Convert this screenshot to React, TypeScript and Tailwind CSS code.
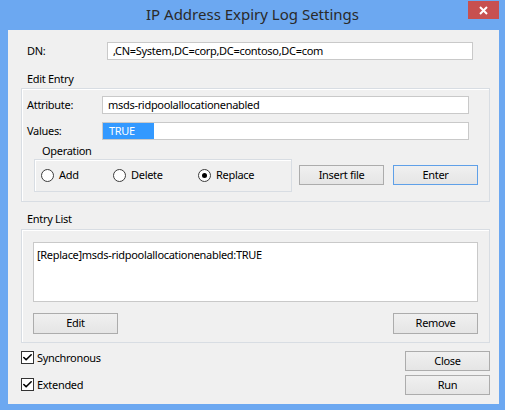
import { Check } from "lucide-react";

function Field({ label, children }: { label: string; children: React.ReactNode }) {
  return (
    <div className="flex items-center">
      <span className="w-[80px] pl-[5px] leading-[16px]">{label}</span>
      {children}
    </div>
  );
}

function TextBox({
  value,
  width,
  selected,
}: {
  value: string;
  width: string;
  selected?: boolean;
}) {
  return (
    <div
      className={`${width} flex h-[18px] items-center border border-[#c9c9c9] bg-white`}
    >
      {selected ? (
        <span className="flex h-full w-[51px] items-center bg-[#3399ff] pl-[6px] text-white">
          {value}
        </span>
      ) : (
        <span className="pl-[5px] whitespace-nowrap">{value}</span>
      )}
    </div>
  );
}

function Btn({
  label,
  focused,
  className,
}: {
  label: string;
  focused?: boolean;
  className?: string;
}) {
  return (
    <button
      type="button"
      className={`flex h-[20px] w-[85px] items-center justify-center border bg-gradient-to-b from-[#f0f0f0] to-[#e5e5e5] text-black ${
        focused ? "border-[#5fa0e8]" : "border-[#acacac]"
      } ${className ?? ""}`}
    >
      {label}
    </button>
  );
}

function Radio({
  label,
  checked,
  width,
}: {
  label: string;
  checked?: boolean;
  width?: string;
}) {
  return (
    <div className={`flex items-center gap-[5px] ${width ?? ""}`}>
      <span className="flex h-[13px] w-[13px] items-center justify-center rounded-full border border-[#3c3c3c] bg-white">
        {checked ? (
          <span className="h-[5px] w-[5px] rounded-full bg-black" />
        ) : null}
      </span>
      <span>{label}</span>
    </div>
  );
}

function CheckBox({ label }: { label: string }) {
  return (
    <div className="flex h-[13px] items-center gap-[3px]">
      <span className="flex h-[13px] w-[13px] items-center justify-center border border-[#333] bg-white">
        <Check className="h-[11px] w-[11px] text-black" strokeWidth={3.5} />
      </span>
      <span className="leading-[13px]">{label}</span>
    </div>
  );
}

export default function App() {
  return (
    <div
      className="h-[410px] w-[505px] bg-[#6ca8f1] text-[11px] tracking-[-0.3px] text-black"
      style={{ fontFamily: '"Noto Sans", "Open Sans", sans-serif' }}
    >
      <div className="relative flex h-[30px] items-center justify-center">
        <span className="pb-[1px] text-[15px] tracking-normal text-[#2a2a2a]">
          IP Address Expiry Log Settings
        </span>
        <div className="absolute top-[1px] right-[6px] flex h-[18px] w-[31px] items-center justify-center bg-[#c75050]">
          <svg width="9" height="9" viewBox="0 0 9 9">
            <path d="M1 1 L8 8 M8 1 L1 8" stroke="white" strokeWidth="2" />
          </svg>
        </div>
      </div>

      <div className="ml-[8px] h-[374px] w-[491px] bg-[#f0f0f0]">
        <div className="flex items-center pt-[12px] pl-[19px]">
          <span className="w-[80px]">DN:</span>
          <TextBox
            width="w-[366px]"
            value=",CN=System,DC=corp,DC=contoso,DC=com"
          />
        </div>

        <div className="mt-[11px] h-[16px] pl-[19px] leading-[16px]">
          Edit Entry
        </div>
        <div className="mt-[1px] ml-[13px] h-[114px] w-[469px] border border-[#d8dde3] shadow-[inset_1px_1px_0_white]">
          <div className="mt-[7px]">
            <Field label="Attribute:">
              <TextBox width="w-[367px]" value="msds-ridpoolallocationenabled" />
            </Field>
          </div>
          <div className="mt-[8px]">
            <Field label="Values:">
              <TextBox width="w-[367px]" value="TRUE" selected />
            </Field>
          </div>
          <div className="mt-[3px] flex">
            <div className="ml-[12px]">
              <div className="h-[16px] pl-[8px] leading-[16px]">Operation</div>
              <div className="flex h-[33px] w-[258px] items-center border border-[#d8dde3] pl-[6px] shadow-[inset_1px_1px_0_white]">
                <Radio label="Add" width="w-[72px]" />
                <Radio label="Delete" width="w-[85px]" />
                <Radio label="Replace" checked />
              </div>
            </div>
            <div className="mt-[22px] ml-[7px] flex gap-[9px]">
              <Btn label="Insert file" />
              <Btn label="Enter" focused />
            </div>
          </div>
        </div>

        <div className="mt-[9px] h-[16px] pl-[19px] leading-[16px]">
          Entry List
        </div>
        <div className="mt-[2px] ml-[13px] h-[114px] w-[469px] border border-[#d8dde3] shadow-[inset_1px_1px_0_white]">
          <div className="mt-[12px] ml-[11px] h-[60px] w-[445px] border border-[#c9c9c9] bg-white pt-[4px] pl-[3px]">
            [Replace]msds-ridpoolallocationenabled:TRUE
          </div>
          <div className="mt-[11px] ml-[11px] flex w-[445px] justify-between">
            <Btn label="Edit" className="h-[21px]" />
            <Btn label="Remove" className="h-[21px]" />
          </div>
        </div>

        <div className="mt-[8px] flex justify-between pr-[9px] pl-[13px]">
          <div className="flex flex-col gap-[14px]">
            <CheckBox label="Synchronous" />
            <CheckBox label="Extended" />
          </div>
          <div className="flex flex-col gap-[4px]">
            <Btn label="Close" />
            <Btn label="Run" />
          </div>
        </div>
      </div>
    </div>
  );
}
